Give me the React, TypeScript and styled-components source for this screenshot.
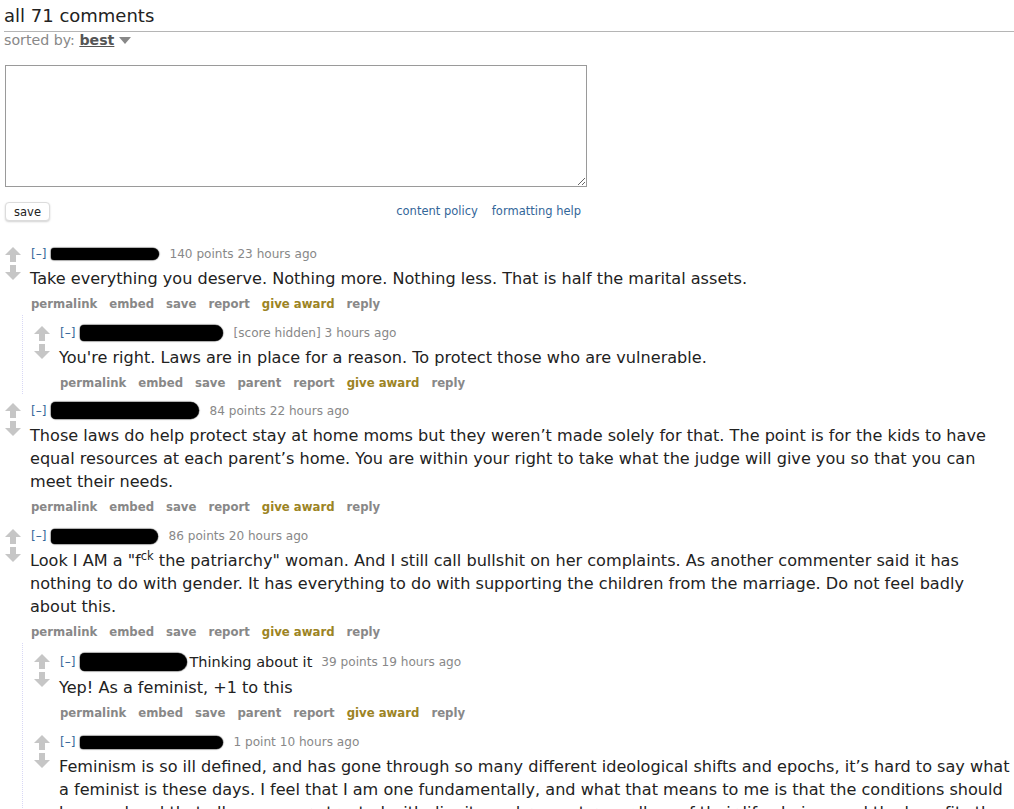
import React from "react";
import styled, { createGlobalStyle } from "styled-components";

const GlobalStyle = createGlobalStyle`
  html, body {
    margin: 0;
    padding: 0;
    background: #fff;
  }
  body {
    font-family: "DejaVu Sans", Verdana, sans-serif;
    color: #222;
  }
`;

const Page = styled.div`
  padding: 0 0 0 4px;
  width: 1010px;
  overflow: hidden;
`;

const Title = styled.div`
  font-size: 18px;
  line-height: 22px;
  padding-top: 5px;
  padding-bottom: 4px;
  border-bottom: 1px solid #b5b5b5;
  color: #222;
`;

const SortLine = styled.div`
  font-size: 14.2px;
  line-height: 17px;
  color: #888;
  display: flex;
  align-items: center;
  gap: 5px;
`;

const SortValue = styled.span`
  font-weight: bold;
  color: #555;
  text-decoration: underline;
`;

const Caret = styled.span`
  width: 0;
  height: 0;
  border-left: 6px solid transparent;
  border-right: 6px solid transparent;
  border-top: 7px solid #888;
`;

const Form = styled.div`
  width: 583px;
  margin-top: 16px;
  margin-left: 1px;
`;

const TextBox = styled.textarea`
  display: block;
  box-sizing: border-box;
  width: 582px;
  height: 122px;
  border: 1px solid #9a9a9a;
  margin: 0;
  padding: 4px;
  font-family: inherit;
`;

const FormBar = styled.div`
  display: flex;
  align-items: center;
  justify-content: space-between;
  margin-top: 15px;
`;

const SaveButton = styled.button`
  box-sizing: border-box;
  width: 45px;
  height: 19px;
  padding: 0;
  border: 1px solid #dcdcdc;
  border-radius: 4px;
  background: #fff;
  box-shadow: 0 1px 2px rgba(0, 0, 0, 0.18);
  font-family: "DejaVu Sans", Verdana, sans-serif;
  font-size: 11.5px;
  color: #222;
`;

const HelpLinks = styled.div`
  display: flex;
  gap: 14px;
  margin-right: 7px;
  margin-top: -2px;
`;

const HelpLink = styled.a`
  font-size: 11.5px;
  color: #336699;
  text-decoration: none;
`;

const List = styled.div`
  margin-top: 15px;
`;

const Thing = styled.div`
  display: flex;
  padding: 10px 0 3px;
`;

const Midcol = styled.div`
  width: 17px;
  display: flex;
  flex-direction: column;
  align-items: center;
  padding-top: 1px;
  gap: 3px;
  flex-shrink: 0;
`;

const Entry = styled.div`
  margin-left: 9px;
  flex: 1;
  min-width: 0;
`;

const Tagline = styled.div`
  font-size: 12.1px;
  line-height: 16px;
  color: #888;
  display: flex;
  align-items: center;
  white-space: nowrap;
  padding-left: 1px;
`;

const Expand = styled.span`
  color: #369;
`;

const Redacted = styled.span<{ $w: number; $h: number }>`
  display: inline-block;
  width: ${(p) => p.$w}px;
  height: ${(p) => p.$h}px;
  background: #000;
  border-radius: ${(p) => p.$h / 2}px ${(p) => p.$h}px ${(p) => p.$h}px
    ${(p) => p.$h / 2}px;
  margin: 0 10px 0 5px;
  box-shadow: 0 0 1px 0.5px rgba(0, 0, 0, 0.6);
`;

const Flair = styled.span`
  color: #222;
  font-size: 14.5px;
  line-height: 18px;
  margin: 0 9px 0 -8px;
`;

const Body = styled.div`
  max-width: 960px;
  font-size: 16.1px;
  line-height: 23px;
  color: #222;
  margin-top: 5px;

  sup {
    font-size: 11.5px;
    line-height: 0;
    vertical-align: 6px;
  }
`;

const Buttons = styled.div`
  display: flex;
  gap: 12px;
  margin-top: 6px;
  font-size: 11.7px;
  line-height: 16px;
  font-weight: bold;
  padding-left: 1px;
`;

const Action = styled.span<{ $gold?: boolean }>`
  color: ${(p) => (p.$gold ? "#9c8424" : "#888")};
`;

const Child = styled.div`
  margin-left: 18px;
  margin-bottom: -2px;
  padding-left: 10px;
  border-left: 1px dotted #d8d8f5;
`;

const Arrow = ({ down }: { down?: boolean }) => (
  <svg
    width="16"
    height="15"
    viewBox="0 0 16 15"
    style={down ? { transform: "rotate(180deg)" } : undefined}
  >
    <path d="M8 0 L16 8 L11 8 L11 15 L5 15 L5 8 L0 8 Z" fill="#c6c6c6" />
  </svg>
);

type CommentProps = {
  blob: [number, number];
  flair?: string;
  score: string;
  body: React.ReactNode;
  parent?: boolean;
  children?: React.ReactNode;
};

const Comment = ({ blob, flair, score, body, parent, children }: CommentProps) => {
  const actions = parent
    ? ["permalink", "embed", "save", "parent", "report", "give award", "reply"]
    : ["permalink", "embed", "save", "report", "give award", "reply"];
  return (
    <>
      <Thing>
        <Midcol>
          <Arrow />
          <Arrow down />
        </Midcol>
        <Entry>
          <Tagline>
            <Expand>[–]</Expand>
            <Redacted $w={blob[0]} $h={blob[1]} />
            {flair && <Flair>{flair}</Flair>}
            {score}
          </Tagline>
          <Body>{body}</Body>
          <Buttons>
            {actions.map((a) => (
              <Action key={a} $gold={a === "give award"}>
                {a}
              </Action>
            ))}
          </Buttons>
        </Entry>
      </Thing>
      {children && <Child>{children}</Child>}
    </>
  );
};

export default function App() {
  return (
    <Page>
      <GlobalStyle />
      <Title>all 71 comments</Title>
      <SortLine>
        <span>
          sorted by: <SortValue>best</SortValue>
        </span>
        <Caret />
      </SortLine>
      <Form>
        <TextBox />
        <FormBar>
          <SaveButton>save</SaveButton>
          <HelpLinks>
            <HelpLink>content policy</HelpLink>
            <HelpLink>formatting help</HelpLink>
          </HelpLinks>
        </FormBar>
      </Form>
      <List>
        <Comment
          blob={[108, 12]}
          score="140 points 23 hours ago"
          body="Take everything you deserve. Nothing more. Nothing less. That is half the marital assets."
        >
          <Comment
            blob={[143, 16]}
            score="[score hidden] 3 hours ago"
            parent
            body="You're right. Laws are in place for a reason. To protect those who are vulnerable."
          />
        </Comment>
        <Comment
          blob={[148, 17]}
          score="84 points 22 hours ago"
          body="Those laws do help protect stay at home moms but they weren’t made solely for that. The point is for the kids to have equal resources at each parent’s home. You are within your right to take what the judge will give you so that you can meet their needs."
        />
        <Comment
          blob={[107, 15]}
          score="86 points 20 hours ago"
          body={
            <>
              Look I AM a "f<sup>ck</sup> the patriarchy" woman. And I still call
              bullshit on her complaints. As another commenter said it has nothing
              to do with gender. It has everything to do with supporting the
              children from the marriage. Do not feel badly about this.
            </>
          }
        >
          <Comment
            blob={[107, 18]}
            flair="Thinking about it"
            score="39 points 19 hours ago"
            parent
            body="Yep! As a feminist, +1 to this"
          />
          <Comment
            blob={[143, 13]}
            score="1 point 10 hours ago"
            parent
            body="Feminism is so ill defined, and has gone through so many different ideological shifts and epochs, it’s hard to say what a feminist is these days. I feel that I am one fundamentally, and what that means to me is that the conditions should be equal and that all women are treated with dignity and respect regardless of their life choices and the benefits they bring."
          />
        </Comment>
      </List>
    </Page>
  );
}
